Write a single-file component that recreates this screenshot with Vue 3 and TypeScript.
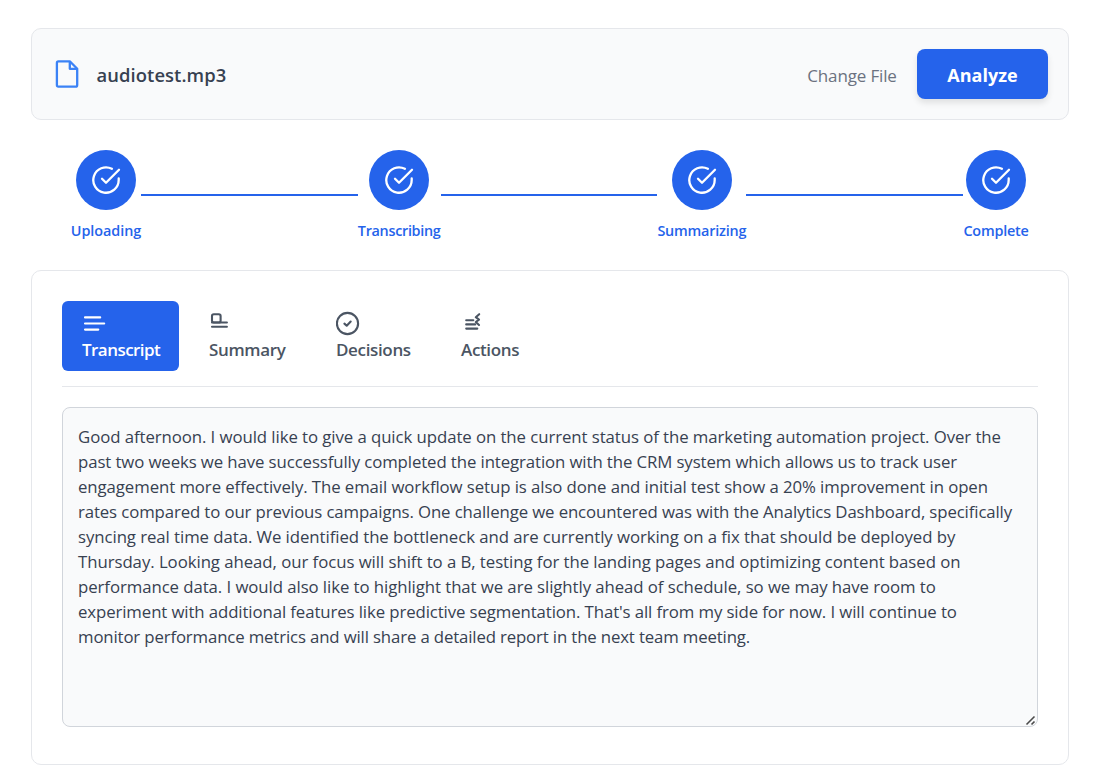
<script setup lang="ts">
import { ref } from 'vue'

interface Tab {
  id: string
  label: string
}

interface Line {
  text: string
  spacing: number
}

const steps: string[] = ['Uploading', 'Transcribing', 'Summarizing', 'Complete']

const tabs: Tab[] = [
  { id: 'transcript', label: 'Transcript' },
  { id: 'summary', label: 'Summary' },
  { id: 'decisions', label: 'Decisions' },
  { id: 'actions', label: 'Actions' },
]

const activeTab = ref('transcript')

const transcript: Line[] = [
  { spacing: -0.073, text: 'Good afternoon. I would like to give a quick update on the current status of the marketing automation project. Over the' },
  { spacing: -0.102, text: 'past two weeks we have successfully completed the integration with the CRM system which allows us to track user' },
  { spacing: -0.081, text: 'engagement more effectively. The email workflow setup is also done and initial test show a 20% improvement in open' },
  { spacing: -0.118, text: 'rates compared to our previous campaigns. One challenge we encountered was with the Analytics Dashboard, specifically' },
  { spacing: -0.067, text: 'syncing real time data. We identified the bottleneck and are currently working on a fix that should be deployed by' },
  { spacing: -0.055, text: 'Thursday. Looking ahead, our focus will shift to a B, testing for the landing pages and optimizing content based on' },
  { spacing: -0.072, text: 'performance data. I would also like to highlight that we are slightly ahead of schedule, so we may have room to' },
  { spacing: -0.103, text: "experiment with additional features like predictive segmentation. That's all from my side for now. I will continue to" },
  { spacing: -0.144, text: 'monitor performance metrics and will share a detailed report in the next team meeting.' },
]
</script>

<template>
  <main class="page">
    <header class="file-card">
      <svg class="file-icon" viewBox="0 0 24 28" fill="none">
        <path d="M2.4 1.3H13.8L21.2 8.8V25Q21.2 26.7 19.5 26.7H2.4Q0.9 26.7 0.9 25V3Q0.9 1.3 2.4 1.3Z" />
        <path d="M13.8 1.3V8.8H21.2" />
      </svg>
      <span class="file-name">audiotest.mp3</span>
      <button class="change" type="button">Change File</button>
      <button class="analyze" type="button">Analyze</button>
    </header>

    <section class="steps">
      <template v-for="(step, i) in steps" :key="step">
        <div v-if="i > 0" class="connector"></div>
        <div class="step" :class="step.toLowerCase()">
          <div class="circle">
            <svg viewBox="0 0 30 30" fill="none">
              <path d="M27.7 13.4V15A12.7 12.7 0 1 1 20.9 3.8" />
              <path d="M28 4.7 15 17.8 11 13.8" />
            </svg>
          </div>
          <span class="step-label">{{ step }}</span>
        </div>
      </template>
    </section>

    <section class="panel">
      <nav class="tabs">
        <button
          v-for="tab in tabs"
          :key="tab.id"
          type="button"
          class="tab"
          :class="[tab.id, { active: tab.id === activeTab }]"
          @click="activeTab = tab.id"
        >
          <svg class="tab-icon" viewBox="0 0 26 26" fill="none">
            <path v-if="tab.id === 'transcript'" d="M3 6.4H18.2M3 12.5H22.2M3 18.6H16.3" />
            <template v-else-if="tab.id === 'summary'">
              <rect x="3" y="3.2" width="8.6" height="8.3" rx="1.8" />
              <path d="M3 11.5H17.9M3 15.7H17.9" />
            </template>
            <template v-else-if="tab.id === 'decisions'">
              <circle cx="11.5" cy="12.5" r="10.6" />
              <path d="M8.4 12.6 10.7 14.7 14.7 10.5" />
            </template>
            <template v-else>
              <path d="M5.2 9.3H12.3M5.2 13.4H14.2M5.2 17.6H16.3" />
              <path d="M18.2 3.2 14.8 6.2 18 8.6 14.8 11 18 14" />
            </template>
          </svg>
          <span class="tab-label">{{ tab.label }}</span>
        </button>
      </nav>

      <div class="transcript-box">
        <p
          v-for="(line, i) in transcript"
          :key="i"
          class="line"
          :style="{ letterSpacing: line.spacing + 'px' }"
        >{{ line.text }}</p>
        <svg class="grip" viewBox="0 0 12 12" fill="none">
          <path d="M1.5 10.5 9.5 2.5M6.5 10.5 9.5 7.5" />
        </svg>
      </div>
    </section>
  </main>
</template>

<style>
body {
  background: #fff;
  overflow: hidden;
}
</style>

<style scoped>
.page {
  box-sizing: border-box;
  width: 1102px;
  height: 767px;
  padding: 28px 33px 0 31px;
  font-family: 'Open Sans', 'Noto Sans', sans-serif;
  color: #374151;
}
button {
  margin: 0;
  border: 0;
  background: none;
  font-family: inherit;
  white-space: nowrap;
}
.file-card {
  box-sizing: border-box;
  height: 92px;
  padding: 0 20px 0 24px;
  border: 1px solid #e5e7eb;
  border-radius: 10px;
  background: #f9fafb;
  display: flex;
  align-items: center;
}
.file-icon {
  width: 24px;
  height: 28px;
  stroke: #3b82f6;
  stroke-width: 2.3;
  stroke-linejoin: round;
  overflow: visible;
}
.file-name {
  margin-left: 16.5px;
  flex: 1;
  font-size: 18.4px;
  font-weight: 600;
  letter-spacing: 0.08px;
}
.change {
  padding: 2px 0 0;
  width: 90px;
  margin-right: 20px;
  color: #6b7280;
  font-size: 17px;
  letter-spacing: -0.15px;
}
.analyze {
  width: 131px;
  height: 50px;
  padding: 2px 0 0;
  border-radius: 8px;
  background: #2563eb;
  color: #fff;
  font-size: 18px;
  font-weight: 700;
  box-shadow: 0 4px 6px rgba(0, 0, 0, 0.1);
}
.steps {
  display: flex;
  margin-top: 30px;
  padding: 0 40px;
  height: 90px;
}
.step {
  display: flex;
  flex-direction: column;
  align-items: center;
}
.uploading { width: 70px; }
.transcribing { width: 83px; }
.summarizing { width: 89px; }
.complete { width: 66px; }
.circle {
  flex: none;
  width: 60px;
  height: 60px;
  border-radius: 50%;
  background: #2563eb;
  display: flex;
  align-items: center;
  justify-content: center;
}
.circle svg {
  width: 30px;
  height: 30px;
  stroke: #fff;
  stroke-width: 2.3;
  stroke-linecap: round;
  stroke-linejoin: round;
}
.step-label {
  margin-top: 11px;
  line-height: 20px;
  font-size: 14.4px;
  font-weight: 600;
  letter-spacing: -0.2px;
  color: #2563eb;
  white-space: nowrap;
}
.uploading .step-label { letter-spacing: -0.05px; }
.transcribing .step-label { letter-spacing: -0.3px; }
.connector {
  flex: 1;
  height: 2px;
  margin-top: 44px;
  background: #2563eb;
}
.panel {
  box-sizing: border-box;
  height: 495px;
  margin-top: 30px;
  padding: 30px;
  border: 1px solid #e5e7eb;
  border-radius: 10px;
}
.tabs {
  display: flex;
  gap: 10px;
  height: 70px;
  padding-bottom: 15px;
  border-bottom: 1px solid #e5e7eb;
}
.tab {
  box-sizing: border-box;
  width: 117px;
  padding: 10px 20px 0;
  display: flex;
  flex-direction: column;
  align-items: flex-start;
  border-radius: 6px;
  color: #4b5563;
  cursor: pointer;
}
.tab.decisions { width: 115px; }
.tab.actions { width: 100px; }
.tab.active {
  background: #2563eb;
  color: #fff;
}
.tab-icon {
  width: 26px;
  height: 26px;
  flex: none;
  stroke: currentColor;
  stroke-width: 2.1;
  stroke-linecap: round;
  stroke-linejoin: round;
}
.tab-label {
  line-height: 25px;
  font-size: 17px;
  font-weight: 600;
  letter-spacing: -0.35px;
}
.transcript .tab-label { letter-spacing: -0.55px; }
.transcript-box {
  position: relative;
  box-sizing: border-box;
  height: 320px;
  margin-top: 20px;
  padding: 16px 15px;
  border: 1px solid #d1d5db;
  border-radius: 8px;
  background: #f9fafb;
  overflow: hidden;
}
.line {
  margin: 0;
  height: 25px;
  line-height: 25px;
  font-size: 16.8px;
  white-space: nowrap;
}
.grip {
  position: absolute;
  right: 0;
  bottom: 0;
  width: 12px;
  height: 12px;
  stroke: #4b4b4b;
  stroke-width: 1.6;
}
</style>
